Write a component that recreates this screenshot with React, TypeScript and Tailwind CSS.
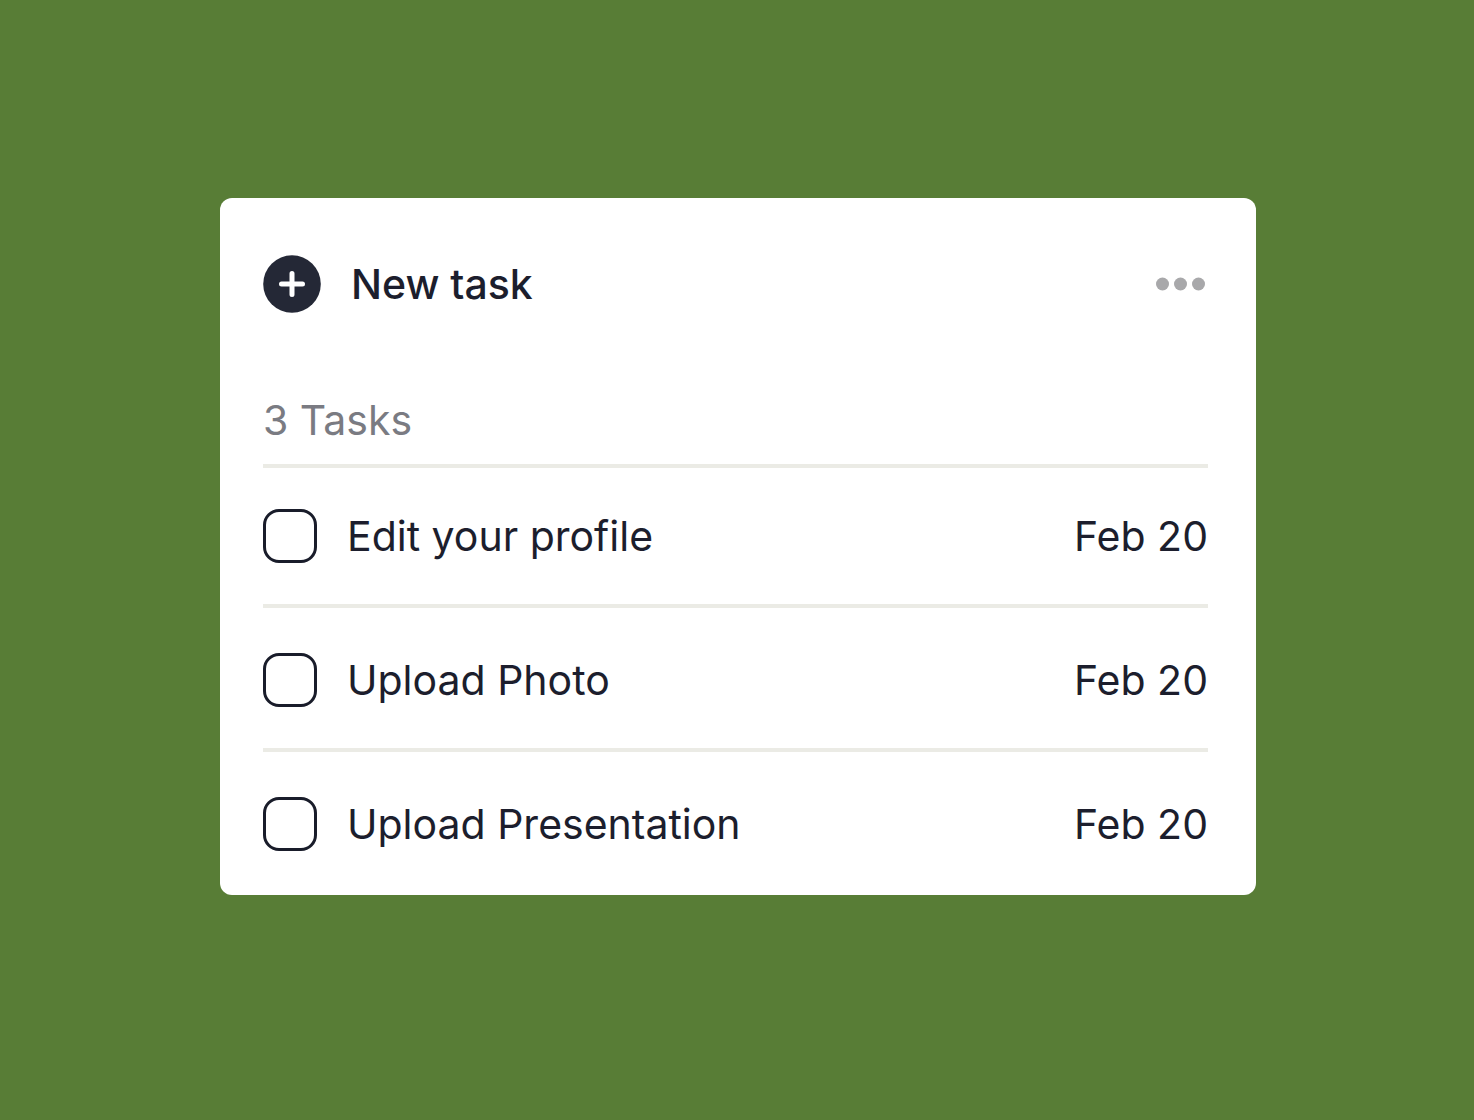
import { useState } from 'react';

interface Task {
  id: string;
  title: string;
  due: string;
}

const TASKS: Task[] = [
  { id: 'edit-profile', title: 'Edit your profile', due: 'Feb 20' },
  { id: 'upload-photo', title: 'Upload Photo', due: 'Feb 20' },
  { id: 'upload-presentation', title: 'Upload Presentation', due: 'Feb 20' },
];

interface TaskRowProps {
  task: Task;
  done: boolean;
  onToggle: () => void;
}

const TaskRow: React.FC<TaskRowProps> = ({ task, done, onToggle }) => (
  <li className="flex items-center pt-[45px] first:pt-[41px] pb-[41px] border-t-4 border-[#ebebe5]">
    <input
      id={task.id}
      type="checkbox"
      checked={done}
      onChange={onToggle}
      className="appearance-none shrink-0 size-[54px] rounded-2xl border-3 border-[#191c2a] bg-white checked:bg-[#252836]"
    />
    <label htmlFor={task.id} className="ml-[30px] flex-1">
      {task.title}
    </label>
    <time>{task.due}</time>
  </li>
);

export default function App() {
  const [done, setDone] = useState<string[]>([]);

  const toggle = (id: string) => {
    setDone(prev => (prev.includes(id) ? prev.filter(d => d !== id) : [...prev, id]));
  };

  return (
    <main className="min-h-screen bg-[#587d36] pl-6 pr-[22px] pt-[198px] pb-20 font-['Inter','Liberation_Sans',sans-serif] text-[41px] leading-[54px] text-[#1c1e2d]">
      <section className="w-full max-w-[1036px] mx-auto rounded-xl bg-white pl-[43px] pr-12 pt-[57px] pb-[3px]">
        <header className="flex items-center justify-between">
          <button type="button" className="flex items-center gap-[30px] font-medium">
            <svg viewBox="0 0 58 58" className="size-[58px]" aria-hidden="true">
              <circle cx="29" cy="29" r="28.8" fill="#242836" />
              <path d="M29 18.5v21M18.5 29h21" stroke="#fff" strokeWidth="5" strokeLinecap="round" />
            </svg>
            New task
          </button>
          <button type="button" aria-label="More options">
            <svg viewBox="0 0 52 14" className="w-[52px] h-3.5" fill="#a8a8aa">
              <circle cx="6.5" cy="7" r="6.5" />
              <circle cx="24.5" cy="7" r="6.5" />
              <circle cx="42.5" cy="7" r="6.5" />
            </svg>
          </button>
        </header>

        <h2 className="mt-20 mb-[17px] text-[#7a7b82]">3 Tasks</h2>
        <ul>
          {TASKS.map(task => (
            <TaskRow
              key={task.id}
              task={task}
              done={done.includes(task.id)}
              onToggle={() => toggle(task.id)}
            />
          ))}
        </ul>
      </section>
    </main>
  );
}
